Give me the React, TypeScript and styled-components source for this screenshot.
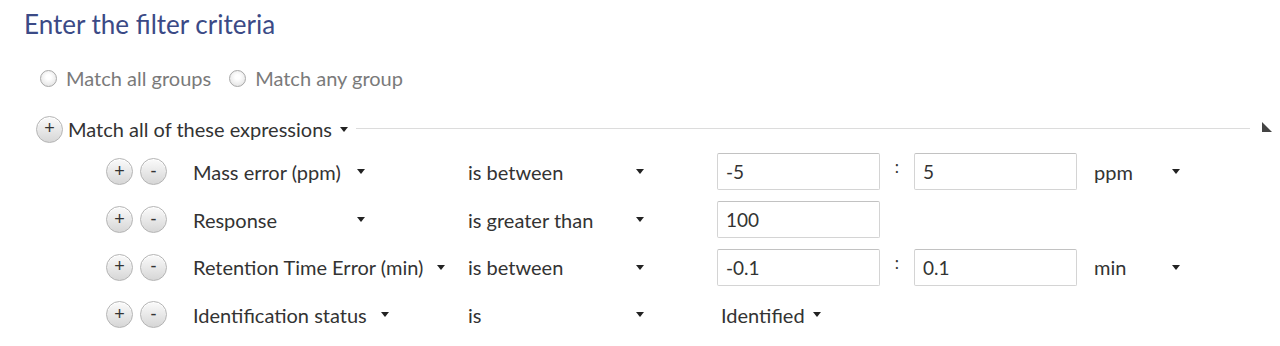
import styled, { createGlobalStyle } from 'styled-components'

const GlobalStyle = createGlobalStyle`
  body {
    margin: 0;
    background: #ffffff;
    font-family: Lato, "Open Sans", "Liberation Sans", sans-serif;
    color: #333;
  }
`

const Page = styled.div`
  width: 1280px;
  height: 346px;
  padding: 8px 0 0 24px;
  box-sizing: border-box;
  overflow: hidden;
`

const Title = styled.h1`
  margin: 0;
  font-size: 26px;
  font-weight: 400;
  color: #3b4a86;
  line-height: 32px;
`

const RadioRow = styled.div`
  display: flex;
  align-items: center;
  gap: 18px;
  margin: 24px 0 0 16px;
  height: 28px;
`

const RadioLabel = styled.label`
  display: flex;
  align-items: center;
  gap: 9px;
  font-size: 20px;
  color: #7a7a7a;
`

const RadioCircle = styled.span`
  width: 15px;
  height: 15px;
  border-radius: 50%;
  border: 1px solid #a8a8a8;
  background: radial-gradient(circle at 50% 40%, #ffffff 20%, #dcdcdc 100%);
`

const GroupHeader = styled.div`
  display: flex;
  align-items: center;
  margin: 22px 0 0 12px;
  height: 30px;
`

const RoundButton = styled.button`
  width: 27px;
  height: 27px;
  border-radius: 50%;
  border: 1px solid #b4b4b4;
  background: linear-gradient(#fbfbfb, #d6d6d6);
  box-shadow: inset 0 1px 0 #fff;
  padding: 0 0 2px;
  display: flex;
  align-items: center;
  justify-content: center;
  font-family: "Liberation Sans", sans-serif;
  font-size: 18px;
  font-weight: 400;
  color: #333;
  line-height: 1;
`

const HeaderText = styled.span`
  font-size: 20px;
  color: #333;
  margin-left: 5px;
`

const Caret = styled.span<{ $gap?: number }>`
  display: inline-block;
  width: 0;
  height: 0;
  border-left: 4.5px solid transparent;
  border-right: 4.5px solid transparent;
  border-top: 5px solid #222;
  margin-left: ${(p) => p.$gap ?? 10}px;
  flex-shrink: 0;
`

const Rule = styled.div`
  flex: 1;
  height: 1px;
  background: #dcdcdc;
  margin: 0 12px 2px 8px;
`

const Grip = styled.span`
  width: 0;
  height: 0;
  border-right: 10px solid transparent;
  border-bottom: 10px solid #444;
  margin: 0 8px 4px 0;
`

const Rows = styled.div`
  margin: 4px 0 0 82px;
  display: flex;
  flex-direction: column;
`

const Row = styled.div`
  display: grid;
  grid-template-columns: 87px 275px 249px 163px 34px 163px auto;
  align-items: center;
  height: 47.7px;
  font-size: 20px;
  color: #333;
`

const Buttons = styled.div`
  display: flex;
  gap: 7px;
`

const Drop = styled.div<{ $min: number }>`
  display: flex;
  align-items: center;
  & > span:first-child {
    min-width: ${(p) => p.$min}px;
    white-space: nowrap;
  }
`

const Input = styled.div`
  height: 37px;
  box-sizing: border-box;
  border: 1px solid #d4d4d4;
  border-top-color: #c2c2c2;
  border-radius: 2px;
  padding: 0 8px;
  display: flex;
  align-items: center;
  font-size: 19px;
  color: #333;
  background: #fff;
`

const Colon = styled.span`
  text-align: center;
  font-size: 17px;
  margin-top: -10px;
`

const Unit = styled.div`
  display: flex;
  align-items: center;
  margin-left: 17px;
  & > span:first-child {
    min-width: 78px;
  }
`

type Expr = {
  field: string
  op: string
  from?: string
  to?: string
  unit?: string
  choice?: string
}

const exprs: Expr[] = [
  { field: 'Mass error (ppm)', op: 'is between', from: '-5', to: '5', unit: 'ppm' },
  { field: 'Response', op: 'is greater than', from: '100' },
  { field: 'Retention Time Error (min)', op: 'is between', from: '-0.1', to: '0.1', unit: 'min' },
  { field: 'Identification status', op: 'is', choice: 'Identified' },
]

export default function App() {
  return (
    <Page>
      <GlobalStyle />
      <Title>Enter the filter criteria</Title>

      <RadioRow>
        <RadioLabel>
          <RadioCircle />
          Match all groups
        </RadioLabel>
        <RadioLabel>
          <RadioCircle />
          Match any group
        </RadioLabel>
      </RadioRow>

      <GroupHeader>
        <RoundButton>+</RoundButton>
        <HeaderText>Match all of these expressions</HeaderText>
        <Caret $gap={8} />
        <Rule />
        <Grip />
      </GroupHeader>

      <Rows>
        {exprs.map((e) => (
          <Row key={e.field}>
            <Buttons>
              <RoundButton>+</RoundButton>
              <RoundButton>-</RoundButton>
            </Buttons>
            <Drop $min={150}>
              <span>{e.field}</span>
              <Caret $gap={14} />
            </Drop>
            <Drop $min={168}>
              <span>{e.op}</span>
              <Caret $gap={0} />
            </Drop>
            {e.choice ? (
              <Drop $min={0} style={{ marginLeft: 4 }}>
                <span>{e.choice}</span>
                <Caret $gap={8} />
              </Drop>
            ) : (
              <Input>{e.from}</Input>
            )}
            {e.to ? <Colon>:</Colon> : <span />}
            {e.to ? <Input>{e.to}</Input> : <span />}
            {e.unit ? (
              <Unit>
                <span>{e.unit}</span>
                <Caret $gap={0} />
              </Unit>
            ) : (
              <span />
            )}
          </Row>
        ))}
      </Rows>
    </Page>
  )
}
